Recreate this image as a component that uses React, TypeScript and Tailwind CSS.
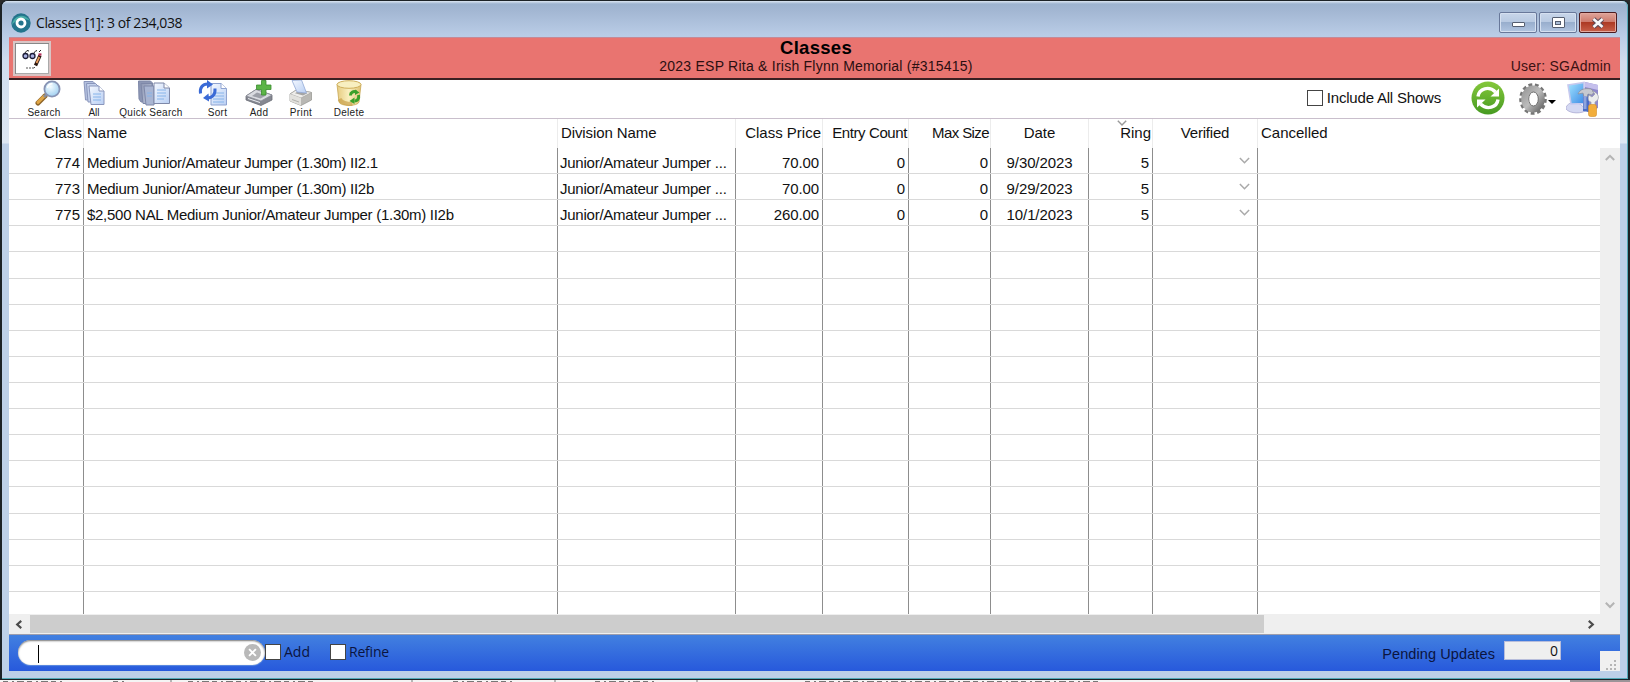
import React from "react";

const COLS = "grid grid-cols-[75px_474px_178px_87px_86px_82px_98px_64px_105px_342px]";

type Col = { title: string; head: string; cell: string };

const columns: Col[] = [
  { title: "Class", head: "justify-end pr-[1px] tracking-[0.1px]", cell: "justify-end pr-[3px]" },
  { title: "Name", head: "justify-start pl-[3px]", cell: "justify-start pl-[3px] tracking-[-0.28px]" },
  { title: "Division Name", head: "justify-start pl-[3px] tracking-[-0.1px]", cell: "justify-start pl-[2px] tracking-[-0.24px]" },
  { title: "Class Price", head: "justify-end pr-[1px]", cell: "justify-end pr-[3px] tracking-[-0.1px]" },
  { title: "Entry Count", head: "justify-end pr-[1px] tracking-[-0.4px]", cell: "justify-end pr-[3px]" },
  { title: "Max Size", head: "justify-end pr-[1px] tracking-[-0.6px]", cell: "justify-end pr-[2px]" },
  { title: "Date", head: "justify-center", cell: "justify-center tracking-[-0.1px]" },
  { title: "Ring", head: "justify-end pr-[1px]", cell: "justify-end pr-[3px]" },
  { title: "Verified", head: "justify-center tracking-[-0.2px]", cell: "justify-center" },
  { title: "Cancelled", head: "justify-start pl-[3px]", cell: "justify-start pl-[3px]" },
];

const data: string[][] = [
  ["774", "Medium Junior/Amateur Jumper (1.30m) II2.1", "Junior/Amateur Jumper ...", "70.00", "0", "0", "9/30/2023", "5", "v", ""],
  ["773", "Medium Junior/Amateur Jumper (1.30m) II2b", "Junior/Amateur Jumper ...", "70.00", "0", "0", "9/29/2023", "5", "v", ""],
  ["775", "$2,500 NAL Medium Junior/Amateur Jumper (1.30m) II2b", "Junior/Amateur Jumper ...", "260.00", "0", "0", "10/1/2023", "5", "v", ""],
];

const rows = Array.from({ length: 18 }, (_, i) => data[i] ?? Array<string>(10).fill(""));

function Chevron({ d, className, w = 2 }: { d: string; className: string; w?: number }) {
  return (
    <svg viewBox="0 0 10 10" className={className} fill="none" stroke="currentColor" strokeWidth={w}>
      <path d={d} />
    </svg>
  );
}
const DOWN = "M0.8 2.8 5 7 9.2 2.8";
const UP = "M0.8 7 5 2.8 9.2 7";
const LEFT = "M7.5 1 3 5 7.5 9";
const RIGHT = "M2.5 1 7 5 2.5 9";

function Defs() {
  return (
    <svg width="0" height="0" className="absolute">
      <defs>
        <linearGradient id="paper" x1="0" y1="0" x2="1" y2="1">
          <stop offset="0" stopColor="#f4f8ff" />
          <stop offset="1" stopColor="#b9cff3" />
        </linearGradient>
        <linearGradient id="slate" x1="0" y1="0" x2="1" y2="1">
          <stop offset="0" stopColor="#8f98b4" />
          <stop offset="1" stopColor="#c0c8dc" />
        </linearGradient>
        <radialGradient id="lens" cx="0.4" cy="0.35" r="0.7">
          <stop offset="0" stopColor="#f4fcff" />
          <stop offset="1" stopColor="#9bcdf0" />
        </radialGradient>
        <linearGradient id="green" x1="0" y1="0" x2="0" y2="1">
          <stop offset="0" stopColor="#85c83b" />
          <stop offset="1" stopColor="#469a22" />
        </linearGradient>
        <linearGradient id="metal" x1="0" y1="0" x2="1" y2="1">
          <stop offset="0" stopColor="#9c9c9c" />
          <stop offset="0.5" stopColor="#bcbcbc" />
          <stop offset="1" stopColor="#6f6f6f" />
        </linearGradient>
        <linearGradient id="bin" x1="0" y1="0" x2="1" y2="0">
          <stop offset="0" stopColor="#e6cb80" />
          <stop offset="0.5" stopColor="#faf0c0" />
          <stop offset="1" stopColor="#dfc274" />
        </linearGradient>
        <linearGradient id="screen" x1="0" y1="0" x2="1" y2="1">
          <stop offset="0" stopColor="#a5e6ff" />
          <stop offset="1" stopColor="#3c8be6" />
        </linearGradient>
      </defs>
    </svg>
  );
}

function SearchIcon() {
  return (
    <svg viewBox="0 0 26 26" className="h-[26px] w-[26px]">
      <path d="M3 23 10 16" stroke="#8d6428" strokeWidth="5" strokeLinecap="round" />
      <path d="M3 22.4 9 16.4" stroke="#e0a646" strokeWidth="3" strokeLinecap="round" />
      <path d="M9 17 12 14" stroke="#8b8f9a" strokeWidth="3" />
      <circle cx="17" cy="9" r="7.6" fill="url(#lens)" stroke="#8793b4" strokeWidth="1.8" />
      <path d="M12.5 8a5 5 0 0 1 5-4.2" stroke="#fff" strokeWidth="1.4" fill="none" />
    </svg>
  );
}

function AllIcon() {
  return (
    <svg viewBox="0 0 24 26" className="h-[26px] w-[24px]" stroke="#8a96bc" strokeWidth="1">
      <path d="M2 1.5h9l3 3V20H3.500z" fill="#b3c0de" />
      <path d="M4.500 3.500h9l3 3V22H6z" fill="#c4d1ec" />
      <path d="M7 6h10l5 5v13.500H9z" fill="url(#paper)" />
      <path d="M17 6v5h5" fill="#fff" />
      <path d="M11 14h8M11 17h8M11 20h8" stroke="#86b4ea" />
    </svg>
  );
}

function QuickIcon() {
  return (
    <svg viewBox="0 0 34 26" className="h-[26px] w-[34px]" stroke="#7e88a8" strokeWidth="1">
      <path d="M1.500 1h12l2 2v19H4l-2-3z" fill="#8c96b4" />
      <path d="M4 3.500h11v20H6z" fill="url(#slate)" />
      <path d="M7 6h10v19H9z" fill="#a9b5d2" />
      <path d="M17 3h10l5.500 5v15.500H17z" fill="url(#paper)" />
      <path d="M27 3v5h5.500" fill="#fff" />
      <path d="M20 10h9M20 13h9M20 16h9M20 19h7M10 13h5M10 16h5" stroke="#86b4ea" />
    </svg>
  );
}

function SortIcon() {
  return (
    <svg viewBox="0 0 30 26" className="h-[26px] w-[30px]">
      <path d="M13 3.500h10l5.500 5V25H13z" fill="url(#paper)" stroke="#8fa3d0" />
      <path d="M23 3.500v5h5.500" fill="#fff" stroke="#8fa3d0" />
      <path d="M17 13h9M17 16h9M15 19h11M15 22h11" stroke="#86b4ea" />
      <path d="M2.500 13.500C1.500 8 4.500 3.500 10.500 4" stroke="#3a6ad6" strokeWidth="3" fill="none" />
      <path d="M9 0 15 4.500 9 8.500z" fill="#3a6ad6" />
      <path d="M17 8.500c.5 6-2.500 9.500-8 9.500" stroke="#3a6ad6" strokeWidth="3" fill="none" />
      <path d="M10.500 13.500 5 18l6 3.500z" fill="#3a6ad6" />
    </svg>
  );
}

function AddIcon() {
  return (
    <svg viewBox="0 0 28 26" className="h-[26px] w-[28px]">
      <path d="M1 16 11 9.500 27 15v5l-11 5.500L1 20z" fill="#858891" stroke="#6a6d76" strokeWidth=".8" />
      <path d="M1 16 11 9.500 27 15l-11 6z" fill="#d9dbe1" stroke="#898c95" strokeWidth=".8" />
      <path d="M7 16 12 12.500l9 3-5.500 3z" fill="#9c9fa8" />
      <path d="M3 18.500 15 22.500" stroke="#eceef2" />
      <path d="M16.500.5h4.500V5h5v4.500h-5v5.500h-4.500V9.500h-5V5h5z" fill="#5cb548" stroke="#3b8d2e" strokeWidth=".8" />
    </svg>
  );
}

function PrintIcon() {
  return (
    <svg viewBox="0 0 24 26" className="h-[26px] w-[24px]">
      <path d="M1 14 8 9.500l14.500 3V20L12 25.500 1 21z" fill="#b9b8b4" stroke="#9b9a96" strokeWidth=".8" />
      <path d="M1 14 8 9.500l14.500 3L12 18z" fill="#efeeeb" stroke="#a5a4a0" strokeWidth=".7" />
      <path d="M6 13.300 9 11.200l9.500 2-4.500 2.300z" fill="#a5a5a5" />
      <path d="M3 .5 12.500 0 17.500 13 8 12z" fill="url(#paper)" stroke="#93a9d6" strokeWidth=".8" />
      <path d="M1 14v7l11 4.500V18z" fill="#e2e1dd" />
      <path d="M3 19.500l7 2.500" stroke="#b2b1ad" />
    </svg>
  );
}

function DeleteIcon() {
  return (
    <svg viewBox="0 0 26 26" className="h-[26px] w-[26px]">
      <path d="M1 4.500 3 22c1 4.500 19 4.500 20 0L25 4.500z" fill="url(#bin)" stroke="#c8a754" strokeWidth=".8" />
      <ellipse cx="13" cy="4.500" rx="12" ry="3.800" fill="#f8efc0" stroke="#cfae5a" />
      <path d="M3.500 19c2 4 8 5 13 5" stroke="#c2953a" strokeWidth="4" fill="none" opacity=".6" />
      <path d="M14.500 15.500c0-3.500 3-4.500 6-3.500M22.500 15c1 4-1.500 6-4 6" stroke="#3ba02b" strokeWidth="3" fill="none" />
      <path d="M19 9.500l4.500 3-4.500 2.500zM18.500 17.500v6.500l-5-3z" fill="#3ba02b" />
    </svg>
  );
}

function RefreshIcon() {
  return (
    <svg viewBox="0 0 34 34" className="h-[34px] w-[34px]">
      <circle cx="17" cy="17" r="16.500" fill="url(#green)" />
      <path d="M7 15.500C8 7.500 18 4.500 24.500 11" stroke="#fff" strokeWidth="3.400" fill="none" />
      <path d="M28 7.500V15.500h-8.500z" fill="#fff" />
      <path d="M27 18.500C26 26.500 16 29.500 9.500 23" stroke="#fff" strokeWidth="3.400" fill="none" />
      <path d="M6 26.500V18.500h8.500z" fill="#fff" />
    </svg>
  );
}

function GearIcon() {
  return (
    <svg viewBox="0 0 28 32" className="h-[32px] w-[28px]">
      <ellipse cx="14" cy="16" rx="12" ry="14" fill="none" stroke="#767676" strokeWidth="3.600" strokeDasharray="3.700 2.580" />
      <ellipse cx="14" cy="16" rx="8.300" ry="10" fill="none" stroke="url(#metal)" strokeWidth="7" />
      <ellipse cx="14.500" cy="16" rx="4.800" ry="7" fill="#fff" stroke="#6d6d6d" strokeWidth="1" />
    </svg>
  );
}

function ToolsIcon() {
  return (
    <svg viewBox="0 0 34 36" className="h-[36px] w-[34px]">
      <path d="M19 1 32 4v23l-10 4-4-3z" fill="#8f89cc" />
      <path d="M19 1 32 4v5l-13-3z" fill="#c4bfec" />
      <path d="M0 26c3-5 9-6 14-3l7 6c-5 4-17 4-21-1z" fill="#d4d8f2" stroke="#a5a4cf" strokeWidth=".7" />
      <path d="M2 4 18 1.500v21L5 23z" fill="url(#screen)" stroke="#c6c9ee" strokeWidth="1.600" />
      <path d="M17 12v18l6 1V13z" fill="#4a6bc4" />
      <path d="M12 13c2-5 7-6 13-5l3 3-2 3-4-1-1 3h-3l-1-4z" fill="#c6c9d0" stroke="#8b8e98" strokeWidth=".7" />
      <path d="M17.500 15h3v13h-3z" fill="#8fa4dc" />
      <path d="M26 10l3 3-3 3-3-2c-2 4 0 7 2 7v4h4v-4c5-2 5-9-3-11z" fill="#eceded" stroke="#9b9eab" strokeWidth=".7" />
      <rect x="22.500" y="23.500" width="8" height="12" rx="2" fill="#f2ad3b" stroke="#d58d25" strokeWidth=".6" />
    </svg>
  );
}

function GlassesIcon() {
  return (
    <svg viewBox="0 0 22 22" className="h-[22px] w-[22px]" fill="none">
      <path d="M3 6 6 2.500l2 .5M12 6l3-3.500 1 .5M18 4l2-2" stroke="#222" strokeWidth="1" />
      <circle cx="4.500" cy="8" r="2.500" fill="#aab2e2" stroke="#1b1b36" strokeWidth="1.300" />
      <circle cx="11.500" cy="8" r="2.500" fill="#aab2e2" stroke="#1b1b36" strokeWidth="1.300" />
      <path d="M19 7.500 14.500 17.500" stroke="#2a1710" strokeWidth="3.400" />
      <path d="M18.300 9 15.500 15" stroke="#e79a5c" strokeWidth="1.800" />
      <path d="M17.500 6.500h3" stroke="#b4305a" strokeWidth="2.300" />
      <path d="M5 20h2M8 20h2M11 20h2l1-1" stroke="#555" />
    </svg>
  );
}

function Tool({ icon, label, cls }: { icon: React.ReactNode; label: string; cls: string }) {
  return (
    <div className={`flex flex-col items-center ${cls}`}>
      {icon}
      <span className="mt-[1px] whitespace-nowrap text-[10px] leading-[12px] text-[#222]">{label}</span>
    </div>
  );
}

function Box() {
  return <span className="block h-4 w-4 shrink-0 border border-[#444] bg-white" />;
}

const winBtn = "flex h-[21px] items-center justify-center rounded-[2px] border border-[#68789a]";
const winFill = "bg-[linear-gradient(#c8d6ea_0%,#b9cae2_45%,#98aecd_50%,#b1c5e1_100%)] shadow-[inset_0_0_0_1px_#d5e0f0]";

export default function App() {
  return (
    <div className="flex h-[682px] w-[1630px] flex-col overflow-hidden bg-[#2b2b2b] font-['Liberation_Sans',Arial,sans-serif] text-[15px] text-[#111]">
      <Defs />
      <div className="flex h-[680px] flex-col rounded-t-[7px] border-x-2 border-t border-b border-[#1c2226] bg-[#bdd0e8]">
        <div className="flex h-[678px] flex-col rounded-t-[6px] border-b border-r border-[#53aab8] bg-[linear-gradient(#dbe6f2_0px,#9db3cf_3px,#a3b7d3_10px,#b9cce6_34px,#cfdded_60px,#dde7f3_142px,#bdd0e8_143px)] px-[7px] pb-[7px]">
          <header className="flex h-[36px] items-center pr-[3px]">
            <svg viewBox="0 0 20 20" className="ml-[2px] mt-[8px] h-[20px] w-[20px]">
              <circle cx="10" cy="10" r="9.700" fill="#24748c" />
              <path d="M1 12a9.500 9.500 0 0 1 18-4C15 5 5 6 1 12z" fill="#48aca8" />
              <circle cx="10" cy="10" r="4" fill="#24748c" stroke="#fff" strokeWidth="2.800" />
            </svg>
            <span className="ml-[5px] mt-[8px] whitespace-nowrap font-['Open_Sans','Noto_Sans',sans-serif] text-[14px] leading-[20px] tracking-[-0.4px]">Classes [1]: 3 of 234,038</span>
            <div className="ml-auto mt-[7px] flex gap-[2px]">
              <span className={`${winBtn} ${winFill} w-[38px]`}>
                <span className="mt-[4px] block h-[5px] w-[13px] rounded-[1px] border border-[#555e70] bg-white" />
              </span>
              <span className={`${winBtn} ${winFill} w-[38px]`}>
                <span className="flex h-[11px] w-[13px] items-center justify-center rounded-[1px] border border-[#555e70] bg-white">
                  <span className="block h-[4px] w-[6px] border border-[#555e70] bg-[#a9bcd6]" />
                </span>
              </span>
              <span className="flex h-[21px] w-[38px] items-center justify-center rounded-[2px] border border-[#4d1c20] bg-[linear-gradient(#dfa49a_0%,#ce7c6e_45%,#ad3a24_50%,#c8604a_100%)] shadow-[inset_0_0_0_1px_#e3a99f]">
                <svg viewBox="0 0 14 12" className="h-[12px] w-[14px]">
                  <path d="M2.500 2l9 8M11.500 2l-9 8" stroke="#5d4a58" strokeWidth="4.600" />
                  <path d="M2.500 2l9 8M11.500 2l-9 8" stroke="#f8f8fa" strokeWidth="2.600" />
                </svg>
              </span>
            </div>
          </header>

          <div className="grid h-[43px] grid-cols-[1fr_auto_1fr] border-b-2 border-t border-b-[#3a2022] border-t-[#c48a98] bg-[#e97470]">
            <div className="ml-[4px] mt-[3px] flex h-[35px] w-[38px] items-center justify-center border-2 border-[#d9c5c5] bg-white shadow-[inset_1px_1px_0_#888,inset_-1px_-1px_0_#aaa]">
              <GlassesIcon />
            </div>
            <div className="flex flex-col items-center whitespace-nowrap">
              <h1 className="ml-[3px] text-[18.5px] font-bold leading-[20px] tracking-[0.3px] text-black">Classes</h1>
              <p className="ml-[3px] text-[14px] leading-[16px] tracking-[0.24px] text-[#2b0f10]">2023 ESP Rita &amp; Irish Flynn Memorial (#315415)</p>
            </div>
            <span className="mt-[20px] justify-self-end pr-[9px] text-[14px] leading-[17px] tracking-[0.23px] text-[#3b1113]">User: SGAdmin</span>
          </div>

          <div className="flex h-[39px] items-start border-b border-[#c9bfcc] bg-white">
            <Tool icon={<SearchIcon />} label="Search" cls="ml-[14px] w-[42px] pl-[8px] [&>span]:-ml-[8px] [&>span]:tracking-[0.25px]" />
            <Tool icon={<AllIcon />} label="All" cls="ml-[17px] w-[24px]" />
            <Tool icon={<QuickIcon />} label="Quick Search" cls="ml-[10px] w-[72px] pl-[3px] [&>span]:-ml-[5px] [&>span]:tracking-[0.28px]" />
            <Tool icon={<SortIcon />} label="Sort" cls="ml-[4px] w-[42px] [&>span]:ml-[9px] [&>span]:tracking-[0.3px]" />
            <Tool icon={<AddIcon />} label="Add" cls="ml-[10px] w-[30px] [&>span]:tracking-[0.3px]" />
            <Tool icon={<PrintIcon />} label="Print" cls="ml-[12px] w-[30px] [&>span]:tracking-[0.4px]" />
            <Tool icon={<DeleteIcon />} label="Delete" cls="ml-[14px] w-[38px] [&>span]:tracking-[0.3px]" />
            <div className="ml-auto mt-[9px] flex items-center gap-[4px] whitespace-nowrap">
              <Box />
              <span className="text-[15px] leading-[17px] tracking-[-0.2px]">Include All Shows</span>
            </div>
            <div className="ml-[30px] mr-[20px] mt-[1px] flex items-start">
              <RefreshIcon />
              <div className="ml-[14px] mt-[2px]"><GearIcon /></div>
              <svg viewBox="0 0 8 4" className="ml-[1px] mt-[19px] h-[4px] w-[8px]"><path d="M0 0h8L4 4z" fill="#000" /></svg>
              <div className="ml-[10px]"><ToolsIcon /></div>
            </div>
          </div>

          <div className="flex h-[495px] bg-white">
            <div className="h-[495px] w-[1591px] overflow-hidden">
              <div className={`${COLS} h-[29px]`}>
                {columns.map((c) => (
                  <div key={c.title} className={`relative flex items-center border-r border-[#ececec] whitespace-nowrap last:border-r-0 ${c.head}`}>
                    {c.title}
                    {c.title === "Ring" && <Chevron d={DOWN} w={1.4} className="absolute -top-px left-[28px] h-[10px] w-[10px] text-[#999]" />}
                  </div>
                ))}
              </div>
              {rows.map((r, i) => (
                <div key={i} className={`${COLS} h-[26.12px] ${i === 17 ? "" : "border-b border-[#d9d9d9]"}`}>
                  {r.map((v, j) => (
                    <div key={j} className={`flex items-center overflow-hidden border-r border-[#8d8d8d] pt-[5px] whitespace-nowrap last:border-r-0 ${columns[j].cell}`}>
                      {v === "v" ? <Chevron d={DOWN} w={1.4} className="-mt-[6px] ml-[78px] h-[11px] w-[11px] text-[#aaa]" /> : v}
                    </div>
                  ))}
                </div>
              ))}
            </div>
            <div className="mt-[29px] flex flex-1 flex-col items-center justify-between bg-[#efefef] pb-[4px] pt-[5px] text-[#b4b4b4]">
              <Chevron d={UP} className="h-[10px] w-[10px]" />
              <Chevron d={DOWN} className="h-[10px] w-[10px]" />
            </div>
          </div>

          <div className="flex h-[20px] shrink-0 items-center bg-[#efefef] text-[#4c4c4c]">
            <Chevron d={LEFT} className="ml-[5px] h-[9px] w-[10px]" w={2.4} />
            <span className="ml-[6px] mt-px block h-[18px] w-[1234px] self-start bg-[#cdcdcd]" />
            <Chevron d={RIGHT} className="ml-auto mr-[24px] h-[9px] w-[10px]" w={2.4} />
          </div>

          <footer className="flex h-[37px] shrink-0 items-start border-t border-[#9c9dad] bg-[linear-gradient(#4280e0,#2759dc)] font-['Open_Sans','Noto_Sans',sans-serif] text-[14px]">
            <div className="ml-[9px] mt-[5px] flex h-[25px] w-[247px] items-center rounded-full bg-white pr-[4px] shadow-[inset_0_1px_2px_#777,0_1px_1px_#5c8be0]">
              <span className="ml-[20px] mt-[3px] block h-[18px] w-px bg-black" />
              <svg viewBox="0 0 16 16" className="ml-auto h-[17px] w-[17px]">
                <circle cx="8" cy="8" r="8" fill="#b9b9b9" />
                <path d="M4.800 4.800l6.400 6.400M11.200 4.800l-6.400 6.400" stroke="#fff" strokeWidth="1.800" />
              </svg>
            </div>
            <div className="mt-[9px] flex items-center gap-[3px] text-[#0b1440]">
              <Box />
              <span className="leading-[16px]">Add</span>
            </div>
            <div className="ml-[20px] mt-[9px] flex items-center gap-[3px] text-[#0b1440]">
              <Box />
              <span className="leading-[16px] tracking-[-0.2px]">Refine</span>
            </div>
            <span className="ml-auto mt-[9px] whitespace-nowrap font-['Liberation_Sans',Arial,sans-serif] text-[14.5px] leading-[20px] tracking-[0.1px] text-[#0b1440]">Pending Updates</span>
            <span className="ml-[9px] mt-[6px] flex h-[19px] w-[57px] items-center justify-end border border-[#b7bddb] bg-[#efefef] pr-[2px] text-[14px] leading-none">0</span>
            <svg viewBox="0 0 20 20" className="ml-[39px] mt-[16px] h-[20px] w-[20px] bg-[#f0f0f0]">
              <path d="M14 9h2v2h-2zM14 13h2v2h-2zM14 17h2v2h-2zM10 13h2v2h-2zM10 17h2v2h-2zM6 17h2v2h-2z" fill="#b5b5b5" />
            </svg>
          </footer>
        </div>
      </div>
      <div className="flex h-[2px] shrink-0 bg-[#f4f4f4]">
        <svg viewBox="0 0 1570 2" className="h-[2px] w-[1570px]" stroke="#777" strokeWidth="1">
          <path d="M3 1.500H62M113 1.500h12M188 1.500H315M453 1.500H515M595 1.500H655M805 1.500H1098" strokeDasharray="5 4 2 3 7 3" />
          <path d="M171 0v2M412 0v2M555 0v2M697 0v2" />
        </svg>
        <span className="ml-auto block h-[2px] w-[60px] bg-[#9c9498]" />
      </div>
    </div>
  );
}
